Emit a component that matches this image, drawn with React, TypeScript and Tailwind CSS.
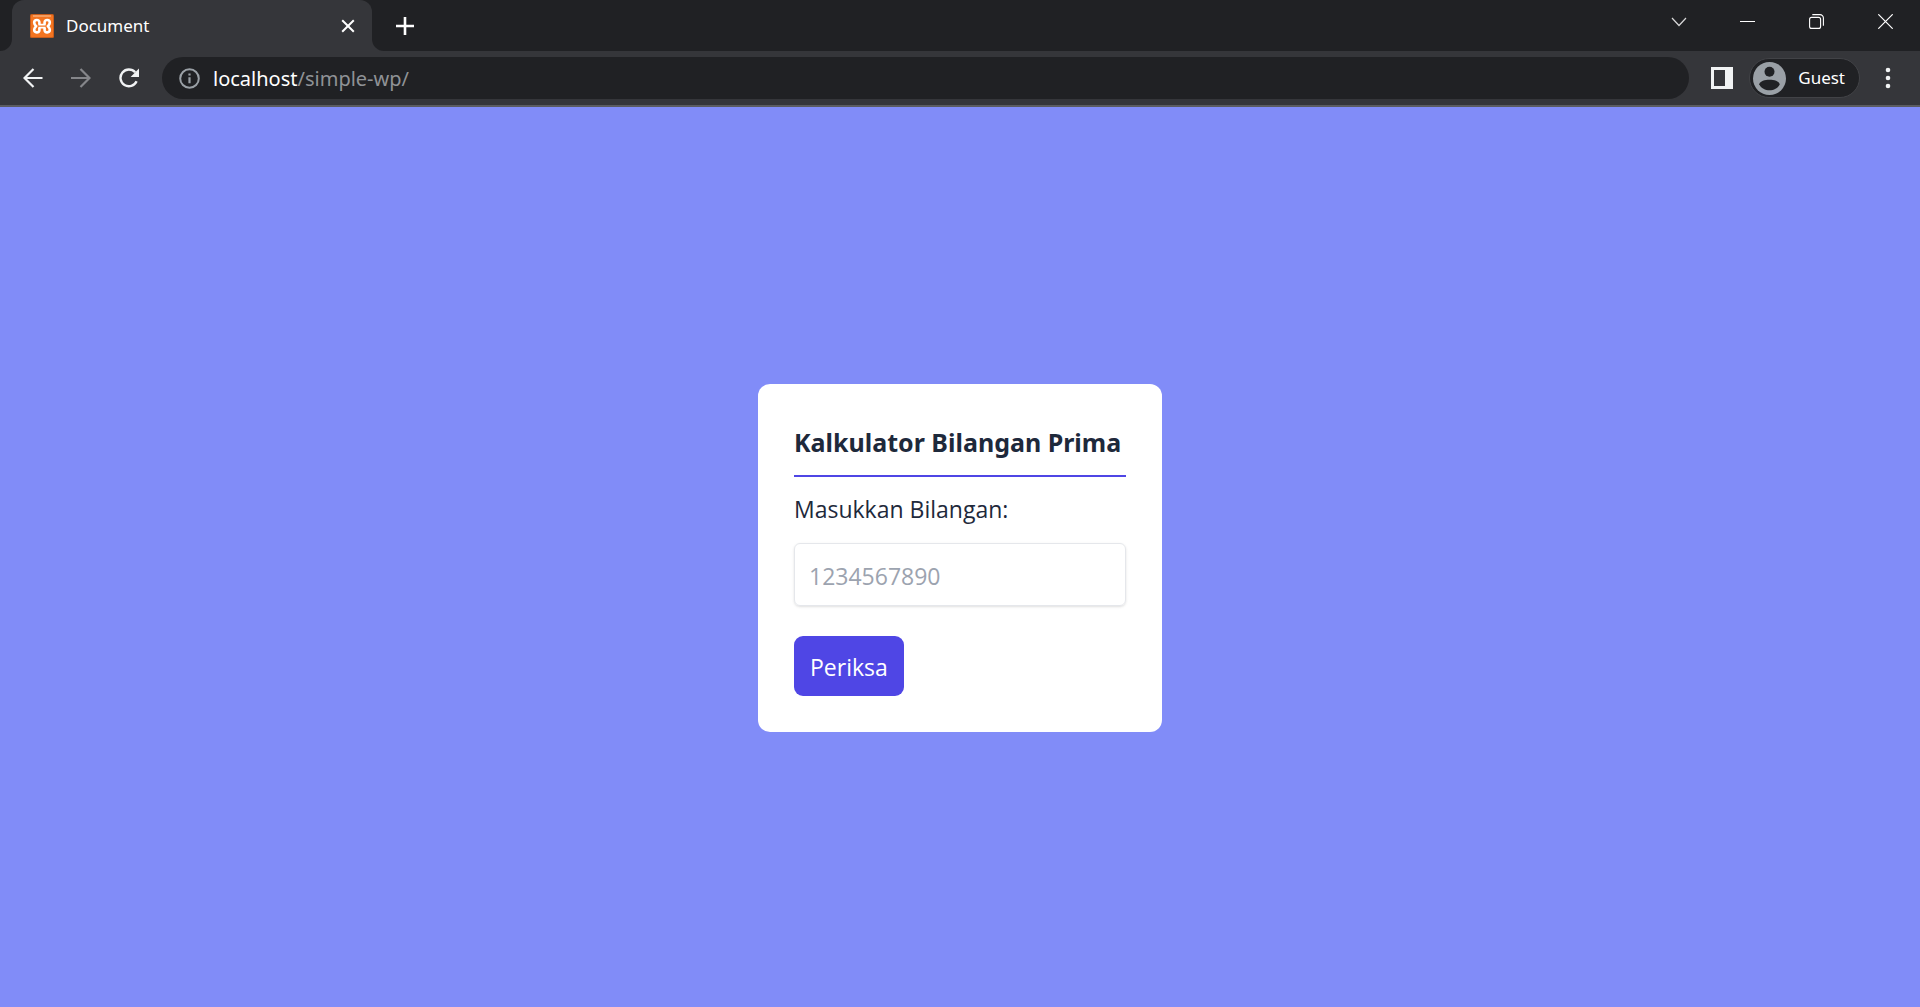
import React from "react";

function TabStrip() {
  return (
    <header className="flex h-[51px] items-start bg-[#202124] text-white">
      <div className="flex h-[51px] w-3 items-end bg-[#35363a]">
        <span className="h-full w-full rounded-br-xl bg-[#202124]" />
      </div>
      <div className="bg-[#202124]">
        <div className="flex h-[51px] w-[360px] items-center rounded-t-xl bg-[#35363a] pr-3 pl-[18px]">
          <XamppIcon />
          <span className="ml-3 flex-1 text-[17px] leading-6">Document</span>
          <button aria-label="Close tab" className="flex size-6 items-center justify-center">
            <svg width="14" height="14" viewBox="0 0 14 14" stroke="#fff" strokeWidth="2" fill="none">
              <path d="M1.2 1.2l11.6 11.6M12.8 1.2L1.2 12.8" />
            </svg>
          </button>
        </div>
      </div>
      <div className="h-[51px] flex-1 bg-[#35363a]">
        <div className="flex h-full items-start justify-between rounded-bl-xl bg-[#202124]">
          <button aria-label="New tab" className="ml-4 flex h-[51px] w-[34px] items-center justify-center">
            <svg width="18" height="18" viewBox="0 0 18 18" stroke="#fff" strokeWidth="2.6" fill="none">
              <path d="M9 0v18M0 9h18" />
            </svg>
          </button>
          <div className="flex h-[43px]">
            <button aria-label="Search tabs" className="flex w-[69px] items-center justify-center">
              <svg width="16" height="10" viewBox="0 0 16 10" stroke="#d8d8d9" strokeWidth="1.2" fill="none">
                <path d="M1 1l7 7.5L15 1" />
              </svg>
            </button>
            <button aria-label="Minimize" className="flex w-[69px] items-center justify-center">
              <span className="h-px w-[15px] bg-white" />
            </button>
            <button aria-label="Restore" className="flex w-[69px] items-center justify-center">
              <svg width="15" height="15" viewBox="0 0 15 15" stroke="#fff" strokeWidth="1.1" fill="none">
                <rect x=".6" y="3.4" width="11" height="11" rx="2" />
                <path d="M3.3 .6H11a3.4 3.4 0 0 1 3.4 3.4v7.8" />
              </svg>
            </button>
            <button aria-label="Close window" className="flex w-[69px] items-center justify-center">
              <svg width="15" height="15" viewBox="0 0 15 15" stroke="#fff" strokeWidth="1.2" fill="none">
                <path d="M.3 .3l14.4 14.4M14.7 .3L.3 14.7" />
              </svg>
            </button>
          </div>
        </div>
      </div>
    </header>
  );
}

function XamppIcon() {
  return (
    <svg width="24" height="24" viewBox="0 0 24 24" fill="none">
      <rect width="24" height="24" rx="1.5" fill="#c65c1b" />
      <rect x="1" y="1" width="22" height="22" rx="1" fill="#f37420" />
      <path d="M3 2h18" stroke="#f9b98b" strokeWidth="1.2" />
      <g stroke="#fff" strokeWidth="2.6" strokeLinejoin="round">
        <path d="M9.400 10.600V8.200C9.400 5.300 4.200 5.300 4.200 8.600C4.200 10.400 5.200 11 6.200 12.200C5.200 13.400 4.200 14 4.200 15.800C4.200 19.200 9.400 19.200 9.400 16.200V13.800" />
        <path d="M14.600 10.600V8.200C14.600 5.300 19.800 5.300 19.800 8.600C19.800 10.400 18.800 11 17.800 12.200C18.800 13.400 19.800 14 19.800 15.800C19.800 19.200 14.600 19.200 14.600 16.200V13.800" />
        <path d="M8.400 10.700H15.600M8.400 13.700H15.600" strokeWidth="1.8" />
      </g>
    </svg>
  );
}

function Toolbar() {
  return (
    <nav className="flex h-14 items-center border-b-2 border-[#5b5c60] bg-[#35363a] pl-[9px] text-white">
      <button aria-label="Back" className="flex size-12 items-center justify-center">
        <svg width="20" height="20" viewBox="0 0 20 20" stroke="#f1f3f4" strokeWidth="2.2" fill="none">
          <path d="M19.500 10H2M10.500 1L1.500 10l9 9" />
        </svg>
      </button>
      <button aria-label="Forward" className="flex size-12 items-center justify-center">
        <svg width="20" height="20" viewBox="0 0 20 20" stroke="#85868a" strokeWidth="2.2" fill="none">
          <path d="M0 10h18M9.500 1l9 9-9 9" />
        </svg>
      </button>
      <button aria-label="Reload" className="flex size-12 items-center justify-center">
        <svg width="20" height="20" viewBox="0 0 20 20" fill="none">
          <path d="M17.600 13.200A8.400 8.400 0 1 1 16.200 4.300" stroke="#f1f3f4" strokeWidth="2.400" />
          <path d="M20 .6V9h-8.400z" fill="#f1f3f4" />
        </svg>
      </button>
      <div className="ml-[9px] flex h-[42px] flex-1 items-center rounded-full bg-[#202124] pl-[17px]">
        <svg width="21" height="21" viewBox="0 0 21 21" fill="none">
          <circle cx="10.500" cy="10.500" r="9.300" stroke="#9aa0a6" strokeWidth="2" />
          <path d="M10.500 9.300v6M10.500 5.500v2" stroke="#9aa0a6" strokeWidth="2.200" />
        </svg>
        <span className="ml-[13px] pt-0.5 text-xl leading-7">
          localhost<span className="text-[#8f9296]">/simple-wp/</span>
        </span>
      </div>
      <button aria-label="Side panel" className="ml-[22px] flex size-[22px] items-center justify-center">
        <svg width="22" height="22" viewBox="0 0 22 22">
          <path fillRule="evenodd" fill="#f1f3f4" d="M0 0h22v22H0zM3 3v16h11V3z" />
        </svg>
      </button>
      <button className="ml-4 flex h-10 items-center rounded-full border border-[#424347] bg-[#202124] pr-[14px] pl-[3px] text-[17px] leading-6">
        <svg width="33" height="33" viewBox="0 0 33 33" aria-hidden="true">
          <circle cx="16.500" cy="16.500" r="16.500" fill="#9aa0a6" />
          <circle cx="16.500" cy="9.800" r="5" fill="#202124" />
          <path d="M6.200 22.200C8 16.400 25 16.400 26.800 22.200C23 30.400 10 30.400 6.200 22.200Z" fill="#202124" />
        </svg>
        <span className="ml-3">Guest</span>
      </button>
      <button aria-label="Menu" className="mr-4 ml-3 flex w-8 items-center justify-center">
        <svg width="6" height="22" viewBox="0 0 6 22" fill="#f1f3f4">
          <circle cx="3" cy="3" r="2.300" />
          <circle cx="3" cy="11" r="2.300" />
          <circle cx="3" cy="19" r="2.300" />
        </svg>
      </button>
    </nav>
  );
}

function PrimeForm() {
  return (
    <form
      className="flex w-[404px] flex-col items-start rounded-xl bg-white p-9 font-['Open_Sans',sans-serif] text-[#1e293b]"
      onSubmit={(e) => e.preventDefault()}
    >
      <h1 className="w-full border-b-2 border-[#4f46e5] pt-1 pb-[15px] font-['Noto_Sans',sans-serif] text-[25px] leading-9 font-bold whitespace-nowrap">
        Kalkulator Bilangan Prima
      </h1>
      <label htmlFor="number" className="mt-[14px] text-[23px] leading-9">
        Masukkan Bilangan:
      </label>
      <input
        id="number"
        type="text"
        placeholder="1234567890"
        className="mt-4 h-[63px] w-full rounded-md border border-[#e5e7eb] px-[14px] pt-0.5 text-[23px] shadow-sm placeholder:text-[#9ca3af]"
      />
      <button className="mt-[30px] h-[60px] rounded-[9px] bg-[#4f46e5] px-4 pt-0.5 text-[23px] text-white">
        Periksa
      </button>
    </form>
  );
}

export default function App() {
  return (
    <div className="flex min-h-screen flex-col bg-[#818cf8] font-['Noto_Sans',sans-serif]">
      <TabStrip />
      <Toolbar />
      <main className="flex flex-1 items-center justify-center pt-0.5">
        <PrimeForm />
      </main>
    </div>
  );
}
